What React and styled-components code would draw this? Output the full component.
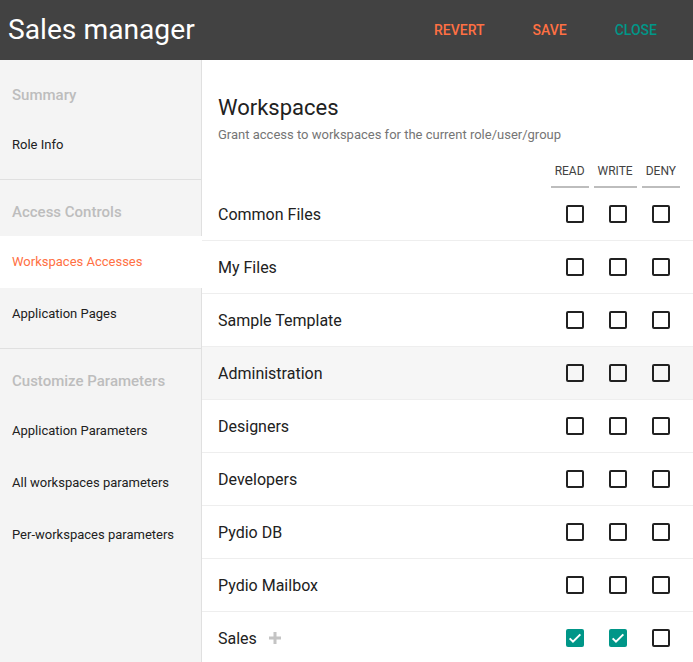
import React from "react";
import styled, { createGlobalStyle } from "styled-components";

const Global = createGlobalStyle`
  html, body { margin: 0; padding: 0; }
  body { font-family: Roboto, "Liberation Sans", sans-serif; background: #fff; }
  * { box-sizing: border-box; }
`;

const Page = styled.div`
  width: 693px;
  height: 662px;
  display: flex;
  flex-direction: column;
  overflow: hidden;
`;

const TopBar = styled.header`
  height: 60px;
  flex: none;
  background: #424242;
  display: flex;
  align-items: center;
  padding: 0 20px 0 8px;
`;

const Title = styled.h1`
  margin: 0;
  flex: 1;
  color: #fff;
  font-size: 28.2px;
  font-weight: 400;
  line-height: 60px;
`;

const Actions = styled.div`
  display: flex;
  gap: 16px;
`;

const FlatButton = styled.button`
  border: none;
  background: transparent;
  padding: 0 16px;
  height: 36px;
  font-family: Roboto, "Liberation Sans", sans-serif;
  font-size: 14px;
  font-weight: 500;
  text-transform: uppercase;
  color: ${(p) => (p.$teal ? "#009688" : "#ff7043")};
`;

const Body = styled.div`
  flex: 1;
  display: flex;
  min-height: 0;
`;

const Sidebar = styled.nav`
  width: 202px;
  flex: none;
  background: #f4f4f4;
  border-right: 1px solid #e0e0e0;
`;

const Section = styled.div`
  padding: ${(p) => (p.$first ? "11px 0 8px" : "8px 0")};
  border-top: ${(p) => (p.$first ? "none" : "1px solid #e0e0e0")};
`;

const SectionLabel = styled.div`
  height: 48px;
  line-height: 48px;
  padding-left: 12px;
  font-size: 15px;
  font-weight: 500;
  color: #bdbdbd;
`;

const NavItem = styled.div`
  height: 52px;
  line-height: 52px;
  padding-left: 12px;
  font-size: 13px;
  color: ${(p) => (p.$active ? "#ff7043" : "#212121")};
  background: ${(p) => (p.$active ? "#fff" : "transparent")};
  margin-right: ${(p) => (p.$active ? "-1px" : "0")};
`;

const Main = styled.main`
  flex: 1;
  padding-top: 33px;
`;

const Heading = styled.div`
  padding-left: 16px;
`;

const H2 = styled.h2`
  margin: 0;
  font-size: 22px;
  font-weight: 400;
  line-height: 30px;
  color: #212121;
`;

const Sub = styled.div`
  margin-top: 3px;
  font-size: 13px;
  line-height: 18px;
  color: #757575;
`;

const ColHeaders = styled.div`
  margin-top: 18px;
  display: flex;
  justify-content: flex-end;
  gap: 5px;
  padding-right: 13px;
`;

const ColHeader = styled.div`
  padding: 1px 4px 7px;
  border-bottom: 2px solid #bdbdbd;
  font-size: 12px;
  line-height: 16px;
  color: #424242;
  text-transform: uppercase;
  text-align: center;
`;

const Row = styled.div`
  height: 53px;
  display: flex;
  align-items: center;
  padding-left: 16px;
  border-bottom: 1px solid #eeeeee;
  background: ${(p) => (p.$hover ? "#f6f6f6" : "#fff")};
`;

const RowLabel = styled.div`
  flex: 1;
  display: flex;
  align-items: center;
  gap: 12px;
  font-size: 16px;
  color: #212121;
`;

const Checks = styled.div`
  display: flex;
  gap: 25px;
  padding-right: 23px;
`;

const Box = styled.div`
  width: 18px;
  height: 18px;
  border-radius: 2px;
  border: ${(p) => (p.$checked ? "none" : "2px solid #212121")};
  background: ${(p) => (p.$checked ? "#009688" : "transparent")};
  display: flex;
  align-items: center;
  justify-content: center;
`;

const Check = ({ checked }) => (
  <Box $checked={checked}>
    {checked && (
      <svg width="16" height="16" viewBox="0 0 24 24">
        <path d="M4 12.5l5 5L20 6.5" fill="none" stroke="#fff" strokeWidth="3" />
      </svg>
    )}
  </Box>
);

const Plus = () => (
  <svg width="12" height="12" viewBox="0 0 12 12">
    <path d="M6 0v12M0 6h12" stroke="#c4c4c4" strokeWidth="3" />
  </svg>
);

const rows = [
  { name: "Common Files" },
  { name: "My Files" },
  { name: "Sample Template" },
  { name: "Administration", hover: true },
  { name: "Designers" },
  { name: "Developers" },
  { name: "Pydio DB" },
  { name: "Pydio Mailbox" },
  { name: "Sales", plus: true, read: true, write: true },
];

export default function App() {
  return (
    <Page>
      <Global />
      <TopBar>
        <Title>Sales manager</Title>
        <Actions>
          <FlatButton>Revert</FlatButton>
          <FlatButton>Save</FlatButton>
          <FlatButton $teal>Close</FlatButton>
        </Actions>
      </TopBar>
      <Body>
        <Sidebar>
          <Section $first>
            <SectionLabel>Summary</SectionLabel>
            <NavItem>Role Info</NavItem>
          </Section>
          <Section>
            <SectionLabel>Access Controls</SectionLabel>
            <NavItem $active>Workspaces Accesses</NavItem>
            <NavItem>Application Pages</NavItem>
          </Section>
          <Section>
            <SectionLabel>Customize Parameters</SectionLabel>
            <NavItem>Application Parameters</NavItem>
            <NavItem>All workspaces parameters</NavItem>
            <NavItem>Per-workspaces parameters</NavItem>
          </Section>
        </Sidebar>
        <Main>
          <Heading>
            <H2>Workspaces</H2>
            <Sub>Grant access to workspaces for the current role/user/group</Sub>
          </Heading>
          <ColHeaders>
            <ColHeader>Read</ColHeader>
            <ColHeader>Write</ColHeader>
            <ColHeader>Deny</ColHeader>
          </ColHeaders>
          {rows.map((r) => (
            <Row key={r.name} $hover={r.hover}>
              <RowLabel>
                {r.name}
                {r.plus && <Plus />}
              </RowLabel>
              <Checks>
                <Check checked={r.read} />
                <Check checked={r.write} />
                <Check />
              </Checks>
            </Row>
          ))}
        </Main>
      </Body>
    </Page>
  );
}
